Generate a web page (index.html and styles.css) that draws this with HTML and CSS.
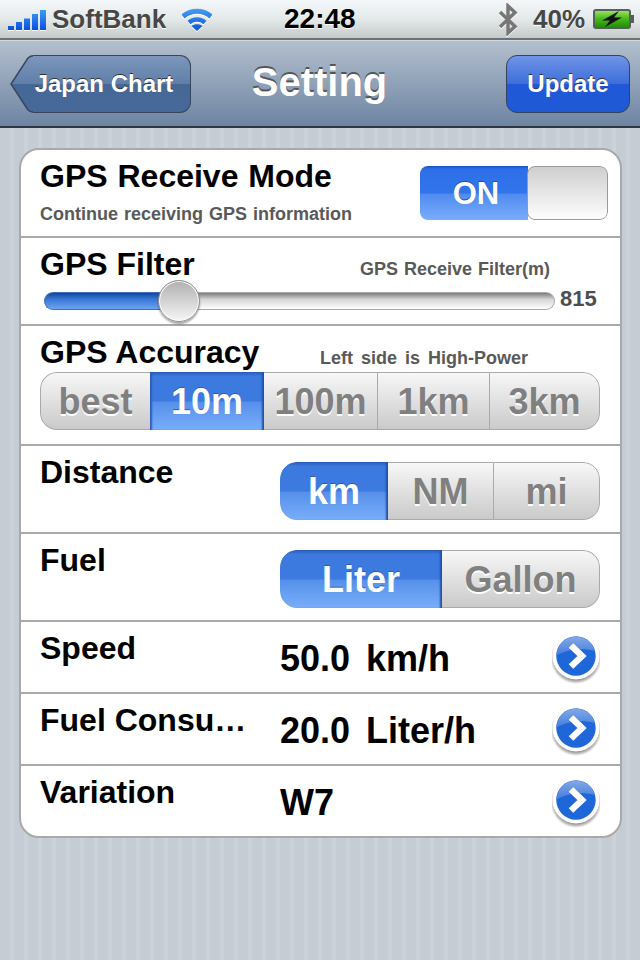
FILE: index.html
```html
<!DOCTYPE html>
<html lang="en">
<head>
<meta charset="utf-8">
<title>Setting</title>
<link rel="stylesheet" href="styles.css">
</head>
<body>
<div class="status">
  <div class="status-left">
    <svg class="signal" width="38" height="21" viewBox="0 0 38 21"><defs><linearGradient id="sig" x1="0" y1="0" x2="0" y2="1"><stop offset="0" stop-color="#3f9bf0"/><stop offset="1" stop-color="#0a50e0"/></linearGradient></defs><path d="M0 16h6v4H0zM8 12h6v8H8zM16 8.500h6V20h-6zM24 4h6v16h-6zM32 0h6v20h-6z" fill="url(#sig)"/><path d="M0 20h6v1H0zM8 20h6v1H8zM16 20h6v1h-6zM24 20h6v1h-6zM32 20h6v1h-6z" fill="#fff"/></svg>
    <span class="carrier">SoftBank</span>
    <svg class="wifi" width="30" height="25" viewBox="0 0 30 25"><defs><linearGradient id="wf" gradientUnits="userSpaceOnUse" x1="0" y1="0" x2="0" y2="24"><stop offset="0" stop-color="#4ba4f2"/><stop offset="1" stop-color="#0a4fdc"/></linearGradient></defs><g fill="none" stroke="url(#wf)"><path d="M1 9.500C9 2.500 21 2.500 29 9.500" stroke-width="5"/><path d="M7 15.500C11.500 11.500 18.500 11.500 23 15.500" stroke-width="4.500"/></g><path d="M15 24L9.500 19C12.500 16.800 17.500 16.800 20.500 19Z" fill="url(#wf)"/></svg>
  </div>
  <div class="clock">22:48</div>
  <div class="status-right">
    <svg class="bt" width="20" height="33" viewBox="0 0 20 33"><path d="M2 9L17 23.500L10 30V3L17 9.500L2 24" fill="none" stroke="#777" stroke-width="3.500"/></svg>
    <span class="batt-pct">40%</span>
    <svg class="batt" width="41" height="20" viewBox="0 0 41 20"><defs><linearGradient id="bat" x1="0" y1="0" x2="0" y2="1"><stop offset="0" stop-color="#a4e66a"/><stop offset=".45" stop-color="#4cbc1c"/><stop offset="1" stop-color="#1d8a08"/></linearGradient></defs><rect x="1" y="1" width="36" height="18" rx="2" fill="url(#bat)" stroke="#55605a" stroke-width="2"/><path d="M38 6h3v8h-3z" fill="#55605a"/><path d="M26 2L9 11.500H17L12 18L29 8.500H21Z" fill="#111"/></svg>
  </div>
</div>
<header class="nav">
  <a class="back"><svg class="back-tip" width="26" height="58" viewBox="0 0 26 58"><defs><linearGradient id="tip" gradientUnits="userSpaceOnUse" x1="0" y1="0" x2="0" y2="58"><stop offset="0" stop-color="#7d97bc"/><stop offset=".5" stop-color="#5f7ea8"/><stop offset=".5" stop-color="#456896"/><stop offset="1" stop-color="#46699a"/></linearGradient></defs><path d="M26 .750H24C21 .750 19.500 1.500 18 3L1 29L18 55C19.500 56.500 21 57.250 24 57.250H26Z" fill="url(#tip)"/><path d="M26 .750H24C21 .750 19.500 1.500 18 3L1 29L18 55C19.500 56.500 21 57.250 24 57.250H26" fill="none" stroke="#39455c" stroke-width="1.500"/></svg><span class="back-body">Japan Chart</span></a>
  <h1 class="title">Setting</h1>
  <a class="update">Update</a>
</header>
<main class="card">
  <section class="row row-mode">
    <div class="mode-text">
      <div class="label">GPS Receive Mode</div>
      <div class="hint">Continue receiving GPS information</div>
    </div>
    <div class="switch"><span class="switch-on">ON</span><span class="switch-thumb"></span></div>
  </section>
  <section class="row row-filter">
    <div class="head-line">
      <div class="label">GPS Filter</div>
      <div class="hint hint-filter">GPS Receive Filter(m)</div>
    </div>
    <div class="slider-line">
      <div class="slider"><div class="slider-fill"></div><div class="slider-rest"></div><div class="slider-thumb"></div></div>
      <div class="slider-val">815</div>
    </div>
  </section>
  <section class="row row-acc">
    <div class="head-line">
      <div class="label">GPS Accuracy</div>
      <div class="hint hint-acc">Left side is High-Power</div>
    </div>
    <div class="seg seg-acc">
      <span class="opt w110">best</span><span class="opt on w114">10m</span><span class="opt w113">100m</span><span class="opt sep w112">1km</span><span class="opt sep w111">3km</span>
    </div>
  </section>
  <section class="row row-choice">
    <div class="label">Distance</div>
    <div class="seg seg-choice">
      <span class="opt on w108">km</span><span class="opt w105">NM</span><span class="opt sep w107">mi</span>
    </div>
  </section>
  <section class="row row-choice">
    <div class="label">Fuel</div>
    <div class="seg seg-choice">
      <span class="opt on w162">Liter</span><span class="opt w158">Gallon</span>
    </div>
  </section>
  <section class="row row-val">
    <div class="label val-label">Speed</div><div class="val">50.0 km/h</div><span class="disc"><svg width="48" height="52" viewBox="0 0 48 52"><use href="#chev"/></svg></span>
  </section>
  <section class="row row-val">
    <div class="label val-label">Fuel Consu…</div><div class="val">20.0 Liter/h</div><span class="disc"><svg width="48" height="52" viewBox="0 0 48 52"><use href="#chev"/></svg></span>
  </section>
  <section class="row row-val">
    <div class="label val-label">Variation</div><div class="val">W7</div><span class="disc"><svg width="48" height="52" viewBox="0 0 48 52"><use href="#chev"/></svg></span>
  </section>
</main>
<svg class="defs" width="0" height="0"><defs>
  <linearGradient id="discg" x1="0" y1="0" x2="0" y2="1"><stop offset="0" stop-color="#84a9e6"/><stop offset="1" stop-color="#3f7bdc"/></linearGradient>
  <radialGradient id="discs" cx=".5" cy=".5" r=".5"><stop offset=".78" stop-color="#000" stop-opacity=".55"/><stop offset="1" stop-color="#000" stop-opacity="0"/></radialGradient>
  <g id="chev"><circle cx="24" cy="26.500" r="25.500" fill="url(#discs)"/><circle cx="24" cy="24" r="23.500" fill="#fff"/><circle cx="24" cy="24" r="19.700" fill="#1f66d8"/><path d="M4.300 24C12 18 30 15 43 19A19.700 19.700 0 0 0 4.300 24Z" fill="url(#discg)"/><path d="M19 13.500L30 24L19 34.500" fill="none" stroke="#fff" stroke-width="6.500"/></g>
</defs></svg>
</body>
</html>
```
FILE: styles.css
```css
* { box-sizing: border-box; }
html, body { margin: 0; padding: 0; }
body {
  width: 640px;
  height: 960px;
  overflow: hidden;
  font-family: "Liberation Sans", Arial, sans-serif;
  background: repeating-linear-gradient(90deg, #c5ccd4 0 10px, #cbd2d9 10px 14px);
}
.status {
  height: 40px;
  display: flex;
  align-items: center;
  position: relative;
  background: linear-gradient(#f4f8fa, #e4e9ea 50%, #c4c9ca);
  border-bottom: 2px solid #6f7275;
  font-weight: bold;
  font-size: 26px;
  color: #474747;
  text-shadow: 0 1px 0 #fff;
}
.status-left { display: flex; align-items: center; padding-left: 8px; width: 284px; }
.signal { margin-top: 2px; margin-right: 6px; }
.carrier { width: 130px; }
.wifi { margin-top: 1px; filter: drop-shadow(0 1px 0 #fff); }
.clock { width: 160px; font-size: 28px; color: #000; }
.status-right { display: flex; align-items: center; flex: 1; }
.bt { margin-left: 54px; filter: drop-shadow(0 1px 0 #fff); }
.batt-pct { margin-left: 15px; }
.batt { margin-left: 8px; }
.nav {
  height: 88px;
  display: flex;
  align-items: center;
  position: relative;
  background: linear-gradient(#b3bfcd, #6d84a2);
  border-top: 1px solid #d2d9e0;
  border-bottom: 2px solid #2d3642;
  color: #fff;
}
.back { display: flex; flex: none; height: 58px; margin-left: 10px; width: 181px; align-items: stretch; }
.back-tip { flex: none; height: 58px; margin-right: -3px; }
.back-body {
  flex: 1;
  min-width: 0;
  display: flex;
  align-items: center;
  justify-content: center;
  padding-right: 15px;
  white-space: nowrap;
  font-weight: bold;
  font-size: 24px;
  text-shadow: 0 -1px 0 #333;
  border: 1.500px solid #39455c;
  border-left: 0;
  border-radius: 0 11px 11px 0;
  background: linear-gradient(#7d97bc, #5f7ea8 50%, #456896 50%, #46699a);
}
.title {
  margin: -2px 58px 0 0;
  width: 257px;
  text-align: center;
  font-size: 40px;
  font-weight: bold;
  text-shadow: 0 -2px 0 #555;
}
.update {
  width: 124px;
  height: 58px;
  display: flex;
  align-items: center;
  justify-content: center;
  font-weight: bold;
  font-size: 24px;
  text-shadow: 0 -1px 0 #333;
  border: 1.500px solid #34425c;
  border-radius: 11px;
  background: linear-gradient(#7094e8, #3c6ed8 50%, #2059d8 50%, #2059d6);
}
.card {
  width: 603px;
  height: 690px;
  margin: 20px 0 0 19px;
  background: #fff;
  border: 2px solid #a9a9a9;
  border-radius: 20px;
  overflow: hidden;
}
.row { border-bottom: 2px solid #a9a9a9; padding-left: 19px; }
.row:last-child { border-bottom: 0; }
.label { font-size: 32px; font-weight: bold; color: #000; line-height: 36px; }
.hint { font-size: 18px; font-weight: bold; color: #595959; line-height: 22px; word-spacing: 1px; }
.row-mode { height: 88px; display: flex; align-items: flex-start; padding-top: 8px; }
.mode-text { width: 380px; }
.mode-text .label { word-spacing: 1px; }
.mode-text .hint { margin-top: 9px; }
.switch {
  width: 188px; height: 54px; margin-top: 8px;
  display: flex; border-radius: 8px; overflow: hidden;
}
.switch-on {
  width: 108px; display: flex; align-items: center; justify-content: center;
  font-size: 31px; font-weight: bold; color: #fff; text-shadow: 0 -1px 0 #1d4ea8;
  padding: 2px 0 0 4px;
  background: linear-gradient(#1a56c0 0, #2d6fe8 6%, #3275ea 50%, #4f8bef 52%, #7aaefb);
}
.switch-thumb {
  flex: 1; border: 1px solid #9a9a9a; border-radius: 8px; margin-left: -1px;
  background: linear-gradient(#cfcfcf, #fdfdfd);
}
.row-filter { height: 88px; padding-top: 8px; }
.head-line { display: flex; align-items: flex-start; }
.head-line .label { width: 320px; }
.hint-filter { margin-top: 12px; }
.hint-acc { margin: 13px 0 0 -40px; word-spacing: 3px; }
.slider-line { display: flex; align-items: center; margin-top: -2px; padding-left: 4px; height: 42px; }
.slider { width: 511px; height: 18px; position: relative; display: flex; }
.slider-fill {
  width: 135px; border-radius: 9px 0 0 9px;
  background: linear-gradient(#0f469e, #3a78d8 40%, #6ca4f0);
  border: 1px solid #3f6fb8; border-right: 0;
}
.slider-rest {
  flex: 1; border-radius: 0 9px 9px 0;
  background: linear-gradient(#7c7c7c, #d6d6d6 40%, #fff);
  border: 1px solid #a8a8a8; border-left: 0;
}
.slider-thumb {
  position: absolute; left: 114px; top: -12px; width: 42px; height: 42px; border-radius: 50%;
  background: linear-gradient(#b0b0b0, #f6f6f6);
  border: 1px solid #8f8f8f;
  box-shadow: inset 0 0 0 1px #fff, 0 2px 2px rgba(0,0,0,.35);
}
.slider-val { margin: 0 0 4px 5px; font-size: 22px; font-weight: bold; color: #4e4e4e; }
.row-acc { height: 120px; padding-top: 8px; }
.seg {
  display: flex;
  height: 58px;
  border-radius: 17px;
  overflow: hidden;
  background: linear-gradient(#f8f8f8, #c9c9c9);
}
.seg-acc { width: 560px; margin-top: 2px; }
.opt {
  display: flex; align-items: center; justify-content: center;
  padding-top: 2px;
  font-size: 36px; font-weight: bold; color: #808080; text-shadow: 0 2px 0 #fff;
  border-top: 1px solid #aaa; border-bottom: 1px solid #aaa;
}
.opt:first-child { border-left: 1px solid #aaa; border-radius: 17px 0 0 17px; }
.opt:last-child { border-right: 1px solid #aaa; border-radius: 0 17px 17px 0; }
.sep { border-left: 1px solid #aaa; }
.opt.on {
  color: #fff; text-shadow: 0 -1px 0 #2c5db4; border: 0;
  background: linear-gradient(#2a5cb8 0, #3d7ae0 8%, #3d7ae0 50%, #5690ea 52%, #78aefa);
  box-shadow: inset -3px 0 2px -1px #1f4fa8, inset 3px 0 2px -1px #2a5cb8;
}
.opt.on:first-child { border: 0; box-shadow: inset -3px 0 2px -1px #1f4fa8; }
.w110 { width: 110px; } .w114 { width: 114px; } .w113 { width: 113px; } .w112 { width: 112px; } .w111 { width: 111px; }
.w108 { width: 108px; } .w105 { width: 105px; } .w107 { width: 107px; } .w162 { width: 162px; } .w158 { width: 158px; }
.row-choice { height: 88px; display: flex; align-items: flex-start; justify-content: space-between; padding-top: 8px; padding-right: 20px; }
.seg-choice { width: 320px; margin-top: 8px; }
.row-val { height: 72px; display: flex; align-items: center; padding-right: 20px; }
.row-val:last-child { height: 70px; }
.val-label { width: 240px; align-self: flex-start; padding-top: 8px; }
.val { flex: 1; font-size: 36px; font-weight: bold; color: #000; word-spacing: 6px; padding-top: 3px; }
.disc { display: flex; width: 48px; height: 52px; margin-top: 2px; }
.defs { position: absolute; }
```
